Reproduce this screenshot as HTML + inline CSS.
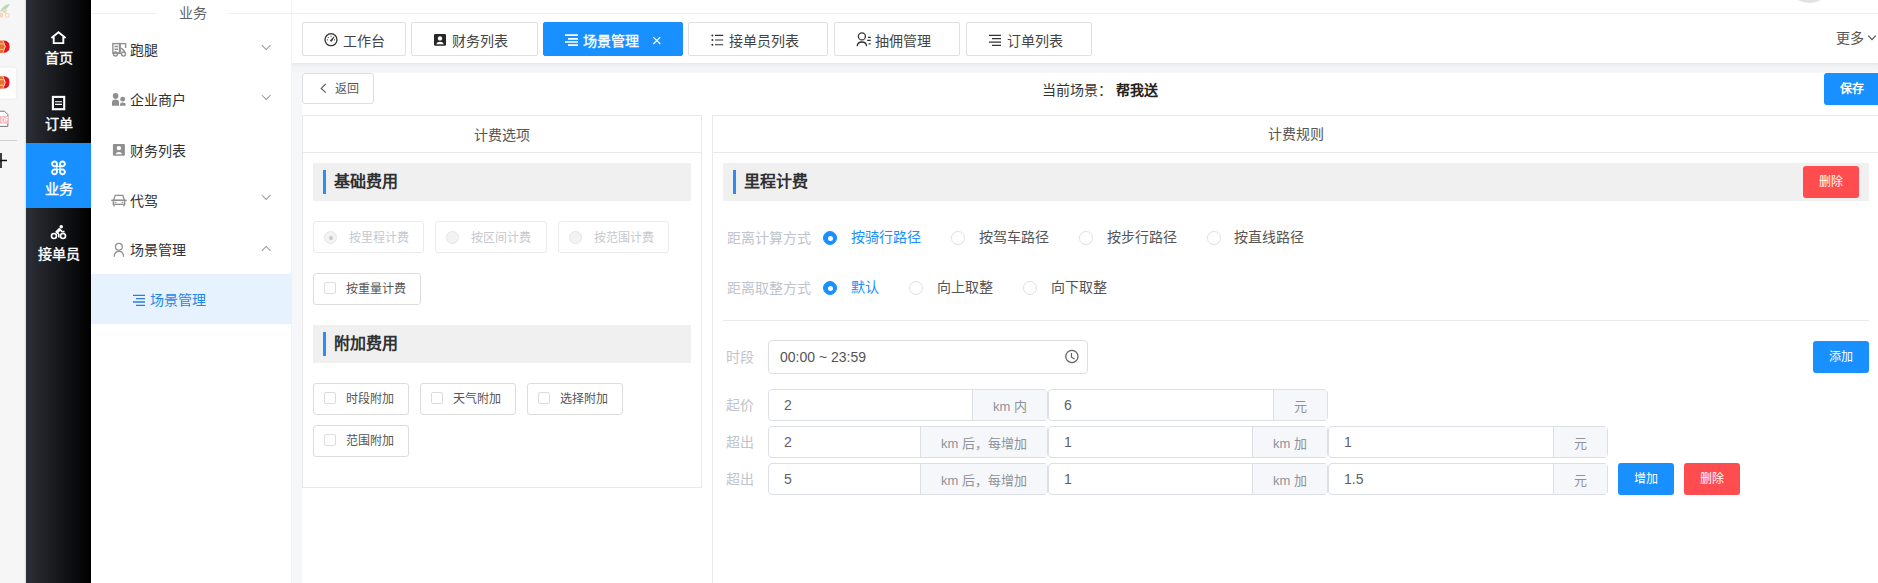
<!DOCTYPE html>
<html lang="zh-CN"><head><meta charset="utf-8">
<style>
*{box-sizing:border-box;margin:0;padding:0}
html,body{width:1878px;height:583px;overflow:hidden;background:#fff;font-family:"Liberation Sans",sans-serif;color:#606266}
.a{position:absolute}
.t{position:absolute;white-space:nowrap;line-height:1}
svg{position:absolute;display:block}
/* strip */
#strip{left:0;top:0;width:26px;height:583px;background:#f6f6f6}
/* dark nav */
#nav{left:26px;top:0;width:65px;height:583px;background:linear-gradient(to right,#2c2f36,#000)}
.ni{position:absolute;left:0;width:65px;height:65px;color:#fff;font-size:14px;font-weight:500}
.ni .t{left:0;width:65px;text-align:center;-webkit-text-stroke:0.4px #fff}
/* side */
#side{left:91px;top:0;width:201px;height:583px;background:#fff;border-right:1px solid #f1f2f4}
.si{position:absolute;left:0;width:200px;height:50px;font-size:14px;color:#303133}
.chev{position:absolute;width:9px;height:5px}
/* main */
#main{left:292px;top:0;width:1586px;height:583px;background:#fff}
.tab{position:absolute;top:22px;height:34px;border:1px solid #e0e0e0;border-radius:2px;background:#fff;font-size:14px;color:#444}
.card{position:absolute;border:1px solid #e9e9e9;background:#fff}
.sec{position:absolute;height:38px;background:#f0f0f0}
.sec .bar{position:absolute;width:3px;height:24px;background:#2d8cf0;top:7px}
.sec .t{font-size:16px;font-weight:bold;color:#303133}
.rb{position:absolute;height:32px;border:1px solid #ebebeb;border-radius:3px;font-size:12px}
.btn{position:absolute;height:32px;border-radius:3px;color:#fff;font-size:12px;font-weight:500;text-align:center;line-height:32px}
.ig{position:absolute;height:32px;border:1px solid #dcdfe6;border-radius:4px;background:#fff}
.ap{position:absolute;top:0;height:30px;padding-top:2px;background:#f5f7fa;border-left:1px solid #dcdfe6;color:#909399;font-size:13px;text-align:center;line-height:30px}
.lbl{position:absolute;font-size:14px;color:#c0c4cc;line-height:1;white-space:nowrap}
.rad{position:absolute;width:14px;height:14px;border-radius:50%;border:1px solid #dcdfe6;background:#fff}
.rad.on{border-color:#1890ff;background:#1890ff}
.rad.on:after{content:"";position:absolute;left:3.5px;top:3.5px;width:5px;height:5px;border-radius:50%;background:#fff}
</style></head><body>
<div id="strip" class="a"></div>
<div id="nav" class="a">
  <div class="ni" style="top:12px"><div class="t" style="top:39px">首页</div></div>
  <div class="ni" style="top:77px"><div class="t" style="top:40px">订单</div></div>
  <div class="ni" style="top:143px;background:#1890ff;height:65px"><div class="t" style="top:39px">业务</div></div>
  <div class="ni" style="top:208px"><div class="t" style="top:39px">接单员</div></div>
</div>
<div id="side" class="a">
  <div class="a" style="left:1px;top:13px;width:199px;height:1px;background:#efefef"></div>
  <div class="t" style="left:66px;top:6px;width:71px;text-align:center;background:#fff;font-size:14px;color:#606266">业务</div>
  <div class="si" style="top:24px"><div class="t" style="left:39px;top:19px">跑腿</div></div>
  <div class="si" style="top:74px"><div class="t" style="left:39px;top:19px">企业商户</div></div>
  <div class="si" style="top:124px"><div class="t" style="left:39px;top:20px">财务列表</div></div>
  <div class="si" style="top:174px"><div class="t" style="left:39px;top:20px">代驾</div></div>
  <div class="si" style="top:224px"><div class="t" style="left:39px;top:19px">场景管理</div></div>
  <div class="si" style="top:274px;width:201px;background:#e6f2fd;color:#1f86ea"><div class="t" style="left:59px;top:19px">场景管理</div></div>
</div>
<div id="main" class="a">
  <div class="a" style="left:0;top:13px;width:1586px;height:1px;background:#eceef1"></div>
</div>
<!-- content gray -->
<div class="a" style="left:292px;top:63px;width:1586px;height:10px;background:linear-gradient(#e7e8e9,#f2f3f5 35%,#f6f7f9)"></div>
<div class="a" style="left:292px;top:73px;width:10px;height:510px;background:#f6f7f9"></div>
<!-- tabs -->
<div class="tab" style="left:302px;width:104px"><div class="t" style="left:40px;top:11px">工作台</div></div>
<div class="tab" style="left:411px;width:127px"><div class="t" style="left:40px;top:11px">财务列表</div></div>
<div class="tab" style="left:543px;width:140px;background:#1890ff;border-color:#1890ff;color:#fff"><div class="t" style="left:39px;top:10.5px;-webkit-text-stroke:0.35px #fff">场景管理</div></div>
<div class="tab" style="left:688px;width:140px"><div class="t" style="left:40px;top:11px">接单员列表</div></div>
<div class="tab" style="left:834px;width:126px"><div class="t" style="left:40px;top:11px">抽佣管理</div></div>
<div class="tab" style="left:966px;width:126px"><div class="t" style="left:40px;top:11px">订单列表</div></div>
<div class="t" style="left:1836px;top:31px;font-size:14px;color:#555">更多</div>
<div class="a" style="left:1786.5px;top:-42.5px;width:45px;height:45px;border-radius:50%;background:#e2e2e2"></div>
<!-- back -->
<div class="a" style="left:302px;top:73px;width:72px;height:31px;border:1px solid #dcdee2;border-radius:3px;background:#fff"></div>
<div class="t" style="left:335px;top:83px;font-size:12px;color:#555">返回</div>
<div class="t" style="left:1042px;top:83px;font-size:14px;color:#333">当前场景：</div>
<div class="t" style="left:1116px;top:83px;font-size:14px;color:#222;font-weight:bold">帮我送</div>
<div class="btn" style="left:1824px;top:73px;width:60px;height:32px;background:#1890ff;text-align:left;padding-left:16px;line-height:32px;font-weight:600">保存</div>
<!-- left card -->
<div class="card" style="left:302px;top:115px;width:400px;height:373px">
  <div class="a" style="left:0;top:36px;width:398px;height:1px;background:#e9e9e9"></div>
  <div class="t" style="left:0;top:12px;width:398px;text-align:center;font-size:14px;color:#555">计费选项</div>
</div>
<div class="sec" style="left:313px;top:163px;width:378px"><div class="bar" style="left:10px"></div><div class="t" style="left:21px;top:11px">基础费用</div></div>
<div class="rb" style="left:313px;top:221px;width:111px;color:#c5c8ce"><div class="rad" style="left:10px;top:9px;width:13px;height:13px;background:#f3f3f3;border-color:#e3e5e8"><div class="a" style="left:3.5px;top:3.5px;width:4px;height:4px;border-radius:50%;background:#c5c8ce"></div></div><div class="t" style="left:35px;top:10px">按里程计费</div></div>
<div class="rb" style="left:435px;top:221px;width:112px;color:#c5c8ce"><div class="rad" style="left:10px;top:9px;width:13px;height:13px;background:#f3f3f3;border-color:#e3e5e8"></div><div class="t" style="left:35px;top:10px">按区间计费</div></div>
<div class="rb" style="left:558px;top:221px;width:111px;color:#c5c8ce"><div class="rad" style="left:10px;top:9px;width:13px;height:13px;background:#f3f3f3;border-color:#e3e5e8"></div><div class="t" style="left:35px;top:10px">按范围计费</div></div>
<div class="rb" style="left:313px;top:273px;width:108px;border-color:#dcdcdc;color:#555"><div class="a" style="left:10px;top:8px;width:12px;height:12px;border:1px solid #dcdcdc;border-radius:2px"></div><div class="t" style="left:32px;top:9px">按重量计费</div></div>
<div class="sec" style="left:313px;top:325px;width:378px"><div class="bar" style="left:10px"></div><div class="t" style="left:21px;top:11px">附加费用</div></div>
<div class="rb" style="left:313px;top:383px;width:96px;border-color:#dcdcdc;color:#555"><div class="a" style="left:10px;top:8px;width:12px;height:12px;border:1px solid #dcdcdc;border-radius:2px"></div><div class="t" style="left:32px;top:9px">时段附加</div></div>
<div class="rb" style="left:420px;top:383px;width:96px;border-color:#dcdcdc;color:#555"><div class="a" style="left:10px;top:8px;width:12px;height:12px;border:1px solid #dcdcdc;border-radius:2px"></div><div class="t" style="left:32px;top:9px">天气附加</div></div>
<div class="rb" style="left:527px;top:383px;width:96px;border-color:#dcdcdc;color:#555"><div class="a" style="left:10px;top:8px;width:12px;height:12px;border:1px solid #dcdcdc;border-radius:2px"></div><div class="t" style="left:32px;top:9px">选择附加</div></div>
<div class="rb" style="left:313px;top:425px;width:96px;border-color:#dcdcdc;color:#555"><div class="a" style="left:10px;top:8px;width:12px;height:12px;border:1px solid #dcdcdc;border-radius:2px"></div><div class="t" style="left:32px;top:9px">范围附加</div></div>
<!-- right card -->
<div class="card" style="left:712px;top:115px;width:1170px;height:480px">
  <div class="a" style="left:0;top:36px;width:1170px;height:1px;background:#e9e9e9"></div>
</div>
<div class="t" style="left:1268px;top:127px;font-size:14px;color:#555">计费规则</div>
<div class="sec" style="left:723px;top:163px;width:1146px"><div class="bar" style="left:10px"></div><div class="t" style="left:21px;top:11px">里程计费</div></div>
<div class="btn" style="left:1803px;top:166px;width:56px;height:32px;background:#ff4d4f">删除</div>
<div class="lbl" style="left:727px;top:231px">距离计算方式</div>
<div class="rad on" style="left:823px;top:231px"></div><div class="t" style="left:851px;top:230px;font-size:14px;color:#1890ff">按骑行路径</div>
<div class="rad" style="left:951px;top:231px"></div><div class="t" style="left:979px;top:230px;font-size:14px;color:#555">按驾车路径</div>
<div class="rad" style="left:1079px;top:231px"></div><div class="t" style="left:1107px;top:230px;font-size:14px;color:#555">按步行路径</div>
<div class="rad" style="left:1207px;top:231px"></div><div class="t" style="left:1234px;top:230px;font-size:14px;color:#555">按直线路径</div>
<div class="lbl" style="left:727px;top:281px">距离取整方式</div>
<div class="rad on" style="left:823px;top:281px"></div><div class="t" style="left:851px;top:280px;font-size:14px;color:#1890ff">默认</div>
<div class="rad" style="left:909px;top:281px"></div><div class="t" style="left:937px;top:280px;font-size:14px;color:#555">向上取整</div>
<div class="rad" style="left:1023px;top:281px"></div><div class="t" style="left:1051px;top:280px;font-size:14px;color:#555">向下取整</div>
<div class="a" style="left:723px;top:320px;width:1146px;height:1px;background:#e8eaec"></div>
<div class="lbl" style="left:726px;top:350px">时段</div>
<div class="ig" style="left:768px;top:340px;width:320px;height:34px;border-color:#dcdee2"><div class="t" style="left:11px;top:9px;font-size:14px;color:#555">00:00 ~ 23:59</div></div>
<div class="btn" style="left:1813px;top:341px;width:56px;height:32px;background:#1890ff">添加</div>
<div class="lbl" style="left:726px;top:398px">起价</div>
<div class="lbl" style="left:726px;top:435px">超出</div>
<div class="lbl" style="left:726px;top:472px">超出</div>
<div class="ig" style="left:768px;top:389px;width:280px"><div class="t" style="left:15px;top:8px;font-size:14px;color:#606266">2</div><div class="ap" style="left:203px;width:75px">km 内</div></div>
<div class="ig" style="left:1048px;top:389px;width:280px"><div class="t" style="left:15px;top:8px;font-size:14px;color:#606266">6</div><div class="ap" style="left:224px;width:54px">元</div></div>
<div class="ig" style="left:768px;top:426px;width:280px"><div class="t" style="left:15px;top:8px;font-size:14px;color:#606266">2</div><div class="ap" style="left:151px;width:127px">km 后，每增加</div></div>
<div class="ig" style="left:1048px;top:426px;width:280px"><div class="t" style="left:15px;top:8px;font-size:14px;color:#606266">1</div><div class="ap" style="left:203px;width:75px">km 加</div></div>
<div class="ig" style="left:1328px;top:426px;width:280px"><div class="t" style="left:15px;top:8px;font-size:14px;color:#606266">1</div><div class="ap" style="left:224px;width:54px">元</div></div>
<div class="ig" style="left:768px;top:463px;width:280px"><div class="t" style="left:15px;top:8px;font-size:14px;color:#606266">5</div><div class="ap" style="left:151px;width:127px">km 后，每增加</div></div>
<div class="ig" style="left:1048px;top:463px;width:280px"><div class="t" style="left:15px;top:8px;font-size:14px;color:#606266">1</div><div class="ap" style="left:203px;width:75px">km 加</div></div>
<div class="ig" style="left:1328px;top:463px;width:280px"><div class="t" style="left:15px;top:8px;font-size:14px;color:#606266">1.5</div><div class="ap" style="left:224px;width:54px">元</div></div>
<div class="btn" style="left:1618px;top:463px;width:56px;height:32px;background:#1890ff">增加</div>
<div class="btn" style="left:1684px;top:463px;width:56px;height:32px;background:#ff4d4f">删除</div>

<svg class="a" style="left:0;top:0;pointer-events:none" width="1878" height="583" viewBox="0 0 1878 583">
 <!-- strip icons -->
 <rect x="24.6" y="0" width="1.4" height="583" fill="#e4e4e4"/>
 <path d="M0,11.8 C2,7 6,4 9.8,4 C8.5,8 4.5,11 0,11.8Z" fill="#b7dcba"/>
 <path d="M0,13 H3 V17.5 H0Z M4.5,13.3 a2.3,2.2 0 1 1 0.01,0Z" fill="#f4d6b8"/>
 <rect x="5.5" y="13.2" width="3.6" height="4.2" rx="1.8" fill="none" stroke="#f4d6b8" stroke-width="1.1"/>
 <g id="hx">
 <path d="M-2,40.4 H2.6 L4.8,46.6 L2.6,52.9 H-2Z" fill="#e9702c"/>
 <path d="M-2,43.9 H3.6 M-2,49.4 H3.6" stroke="#f8d8c0" stroke-width="0.9"/>
 <path d="M3.2,40.2 Q7.2,40.4 8.9,43 Q10.4,46.6 8.9,50.2 Q7.2,52.8 3.2,53 L5.7,46.6Z" fill="#e6141b"/>
 </g>
 <rect x="-4" y="67.1" width="20.8" height="32.2" rx="3" fill="#fff" stroke="#e6e6e6" stroke-width="0.7"/>
 <use href="#hx" transform="translate(0,35.8)"/>
 <path d="M-1,111.2 H4.5 L7.8,114.5 V126.4 H-1" fill="#fff" stroke="#666" stroke-width="0.9"/>
 <rect x="-1" y="116" width="9.8" height="7.6" fill="#f2b9c1"/>
 <path d="M2,117.5 V122 M2,117.5 H3.6 Q4.6,117.5 4.6,119.7 Q4.6,122 3.6,122 H2 M6,117.5 V122 M6,117.5 H8 M6,119.6 H7.6" stroke="#fff" stroke-width="0.8" fill="none"/>
 <rect x="0" y="140" width="17" height="1" fill="#d2d2d2"/>
 <path d="M-1,160.5 H7 M1,153 V168" stroke="#111" stroke-width="1.6" fill="none"/>
 <!-- nav icons -->
 <g stroke="#fff" fill="none" stroke-width="2">
  <path d="M51.4,38 L58.5,32.2 L65.6,38" stroke-width="1.9"/>
  <path d="M53.7,37 V43.1 H63.3 V37" stroke-width="1.9"/>
  <rect x="52.9" y="96.9" width="11.3" height="12.3" stroke-width="2.1"/>
 </g>
 <path d="M55,101.8 H62 M55,104.4 H62" stroke="#fff" stroke-width="1.1"/>
 <g stroke="#fff" fill="none" stroke-width="1.9">
  <path d="M56.9,166.3 H54.6 A2.4,2.4 0 1 1 56.9,163.9 Z"/>
  <path d="M60.1,166.3 H62.4 A2.4,2.4 0 1 0 60.1,163.9 Z"/>
  <path d="M56.9,169.5 H54.6 A2.4,2.4 0 1 0 56.9,171.9 Z"/>
  <path d="M60.1,169.5 H62.4 A2.4,2.4 0 1 1 60.1,171.9 Z"/>
  <path d="M56.9,166.3 H60.1 V169.5 H56.9Z" stroke-width="1"/>
 </g>
 <g fill="#fff">
  <circle cx="54" cy="236" r="3.3"/><circle cx="63" cy="236" r="3.3"/>
  <circle cx="61.2" cy="226.8" r="1.8"/>
  <path d="M55.3,231.6 L58.3,228.4 Q59.3,227.6 60.3,228.6 L62.3,230.8 H64.5 V232.4 H61.7 L60.2,231 L58.4,232.8 L59.6,234 V237.6 H58 V234.6 L55.6,232.6Z"/>
 </g>
 <g fill="#1d1e22"><circle cx="54" cy="236" r="1.7"/><circle cx="63" cy="236" r="1.7"/></g>
 <!-- side icons -->
 <g fill="none" stroke="#8f8f8f" stroke-width="1.4">
  <rect x="112.9" y="43.6" width="6.6" height="9.6"/>
  <path d="M114.5,46.5 H118 M114.5,49.3 H118"/>
  <path d="M120.2,43.2 V52.5 M120.2,43.6 H125.6 V48 M121.4,48 L125,52"/>
  <circle cx="115.5" cy="54" r="2"/><circle cx="123.5" cy="54" r="2"/>
  <path d="M117.5,53.3 H121.5"/>
 </g>
 <g fill="#8f8f8f">
  <circle cx="115.6" cy="95.9" r="2.8"/>
  <path d="M112,105.8 V102.3 Q112,99.6 115.5,99.6 Q119,99.6 119,102.3 V105.8Z"/>
  <circle cx="122.7" cy="99.2" r="2.4"/>
  <path d="M120,105.8 V104.6 Q120,102.6 122.8,102.6 Q125.6,102.6 125.6,104.6 V105.8Z"/>
  <rect x="112.9" y="143.9" width="12" height="11.8" rx="1.2"/>
 </g>
 <g fill="#fff"><circle cx="118.9" cy="148.1" r="2.2"/><path d="M115.6,154.3 Q116.3,152 118.9,152 Q121.5,152 122.2,154.3Z"/></g>
 <g fill="none" stroke="#8f8f8f" stroke-width="1.3">
  <path d="M113.6,200.2 L115.2,195.4 H122.8 L124.4,200.2"/>
  <path d="M111.2,200.3 H126.8"/>
  <rect x="113.3" y="200.3" width="11.4" height="4"/>
  <path d="M114,204.3 V206.6 M124,204.3 V206.6"/>
 </g>
 <g fill="#8f8f8f"><rect x="114.5" y="201.8" width="2" height="1"/><rect x="121.5" y="201.8" width="2" height="1"/></g>
 <g fill="none" stroke="#8f8f8f" stroke-width="1.3">
  <circle cx="118.9" cy="246.7" r="3.4"/>
  <path d="M114.3,256.8 Q114.3,251.4 118.9,251.4 Q123.5,251.4 123.5,256.8"/>
 </g>
 <g stroke="#2a7fd4" stroke-width="1.3">
  <path d="M133,295.3 H145 M136,298.7 H145 M133,302 H145 M136,305.3 H145"/>
 </g>
 <g fill="none" stroke="#9a9a9a" stroke-width="1.05">
  <path d="M261.8,45.2 L266.2,49.6 L270.6,45.2"/>
  <path d="M261.8,100 L266.2,104.4 L270.6,100" transform="translate(0,-5)"/>
  <path d="M261.8,195 L266.2,199.4 L270.6,195"/>
  <path d="M261.8,250.8 L266.2,246.4 L270.6,250.8"/>
 </g>
 <!-- tab icons -->
 <g fill="none" stroke="#333" stroke-width="1.3">
  <circle cx="331" cy="39.7" r="6"/>
 </g>
 <path d="M330.2,40.6 L334,36.8 L331.6,41.3Z" fill="#333" stroke="#333" stroke-width="0.8"/>
 <g fill="#333"><circle cx="331" cy="36.2" r="0.6"/><circle cx="328.3" cy="37.5" r="0.6"/><circle cx="327.4" cy="39.8" r="0.6"/><circle cx="334.6" cy="39.8" r="0.6"/></g>
 <rect x="434" y="34" width="12" height="11.8" rx="1.3" fill="#262626"/>
 <circle cx="440" cy="38.4" r="2.2" fill="#fff"/>
 <path d="M436.2,44.2 Q437,41.8 440,41.8 Q443,41.8 443.8,44.2Z" fill="#fff"/>
 <path d="M565,35.2 H578 M568,38.9 H578 M565,42 H578 M568,45.1 H578" stroke="#fff" stroke-width="1.7"/>
 <path d="M653.3,37.2 L660.3,44 M660.3,37.2 L653.3,44" stroke="#fff" stroke-width="1.1"/>
 <g fill="#333"><circle cx="712.4" cy="35.4" r="1"/><circle cx="712.4" cy="40" r="1"/><circle cx="712.4" cy="44.7" r="1"/></g>
 <path d="M715,35.4 H723.2 M715,40 H723.2 M715,44.7 H723.2" stroke="#333" stroke-width="1.15"/>
 <g fill="none" stroke="#333" stroke-width="1.3">
  <circle cx="861.9" cy="36.4" r="3.5"/>
  <path d="M857.2,46.3 Q857.4,42 861.9,42 Q866.4,42 866.6,46.3"/>
  <path d="M868,37.4 H870.8 M867.2,40.3 H870.8 M868.6,43.8 H870.6"/>
 </g>
 <path d="M989,35.4 H1001 M992,38.6 H1001 M989,42 H1001 M992,45.3 H1001" stroke="#333" stroke-width="1.25"/>
 <path d="M1868.3,35.6 L1872,39.6 L1875.7,35.6" fill="none" stroke="#555" stroke-width="1.2"/>
 <path d="M325.7,84 L321.2,88.4 L325.7,92.7" fill="none" stroke="#555" stroke-width="1.05"/>
 <circle cx="1071.9" cy="356.4" r="6.1" fill="none" stroke="#606266" stroke-width="1.25"/>
 <path d="M1071.5,353 V357.2 L1074.6,359" fill="none" stroke="#606266" stroke-width="1.2"/>
</svg>
</body></html>
